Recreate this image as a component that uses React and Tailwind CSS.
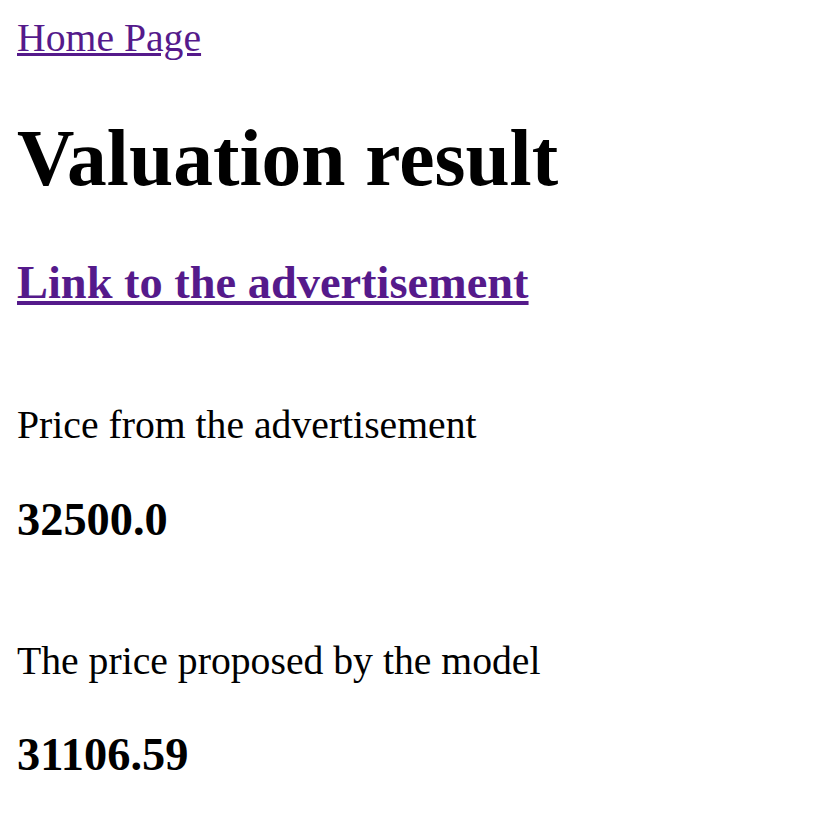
import React from "react";

export default function App() {
    return (
        <div className="min-h-[840px] bg-white pt-[15px] pl-[17px] text-black font-['Liberation_Serif',serif]">
            <div className="text-[39.7px] leading-[46px]">
                <a href="#" className="text-[#551a8b] underline">Home Page</a>
            </div>
            <h1 className="mt-[52px] text-[79.5px] leading-[91px] font-bold">Valuation result</h1>
            <h3 className="mt-[52px] text-[46.4px] leading-[53px] font-bold">
                <a href="#" className="text-[#551a8b] underline">Link to the advertisement</a>
            </h3>
            <p className="mt-[93px] text-[39.7px] leading-[46px]">Price from the advertisement</p>
            <h3 className="mt-[45px] text-[46.4px] leading-[53px] font-bold">32500.0</h3>
            <p className="mt-[92px] text-[39.7px] leading-[46px]">The price proposed by the model</p>
            <h3 className="mt-[44px] text-[46.4px] leading-[53px] font-bold">31106.59</h3>
        </div>
    );
}
